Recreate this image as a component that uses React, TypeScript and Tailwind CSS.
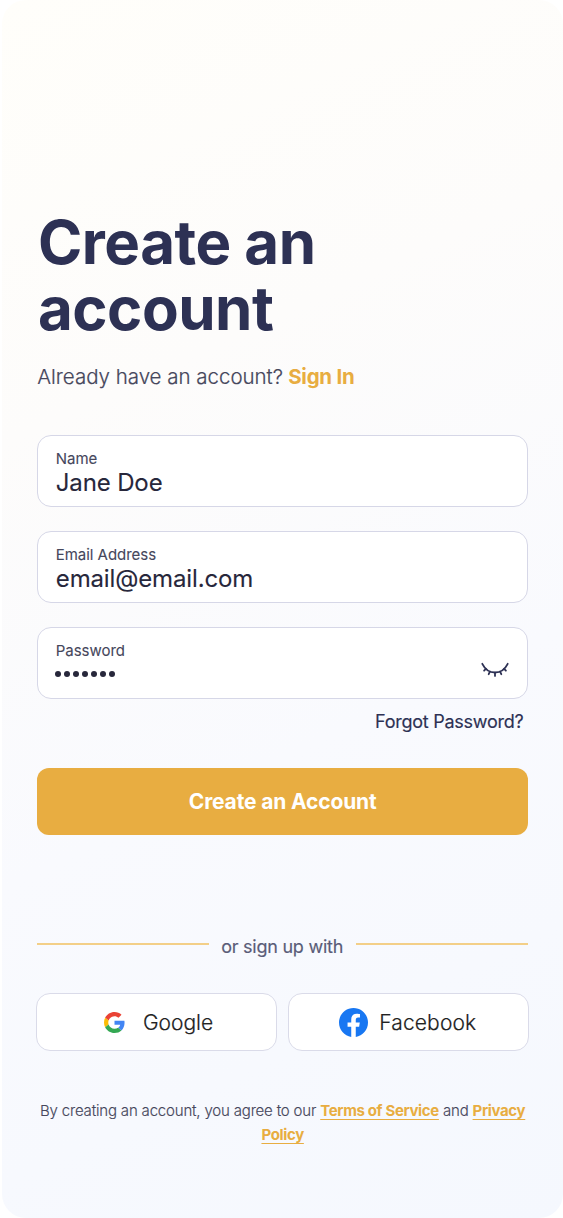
import React from "react";

function Field({ label, children, icon }: { label: string; children: React.ReactNode; icon?: React.ReactNode }) {
  return (
    <div className="flex h-[72px] w-full items-center justify-between rounded-[14px] border border-[#d6d7e7] bg-white pl-[17.5px] pr-[18.5px] pt-[3px]">
      <div className="flex flex-col">
        <span className="text-[15px] leading-[20px] tracking-[-0.04px] text-[#46475c] [-webkit-text-stroke:0.1px_#46475c]">{label}</span>
        <span className="h-[28px] text-[24px] leading-[28px] tracking-[-0.14px] text-[#27273b] [-webkit-text-stroke:0.1px_#27273b]">{children}</span>
      </div>
      {icon}
    </div>
  );
}

function ClosedEye() {
  return (
    <svg className="mt-[11px] h-[16px] w-[28px]" viewBox="0 0 28 16" fill="none" stroke="#2d3154" strokeWidth="1.8" strokeLinecap="round">
      <path d="M1.3 1.8C4 7.2 8.7 10.5 14 10.5S24 7.2 26.7 1.8" />
      <path d="M14 10.7v3.2M8.9 9.6l-1.2 2.6M19.1 9.6l1.2 2.6M4.9 6.8L3.1 8.7M23.1 6.8l1.8 1.9" />
    </svg>
  );
}

function GoogleLogo() {
  return (
    <svg className="h-[21px] w-[21px]" viewBox="0 0 48 48">
      <path fill="#EA4335" d="M24 9.5c3.54 0 6.71 1.22 9.21 3.6l6.85-6.85C35.9 2.38 30.47 0 24 0 14.62 0 6.51 5.38 2.56 13.22l7.98 6.19C12.43 13.72 17.74 9.5 24 9.5z" />
      <path fill="#4285F4" d="M46.98 24.55c0-1.57-.15-3.09-.38-4.55H24v9.02h12.94c-.58 2.96-2.26 5.48-4.78 7.18l7.73 6c4.51-4.18 7.09-10.36 7.09-17.65z" />
      <path fill="#FBBC05" d="M10.53 28.59c-.48-1.45-.76-2.99-.76-4.59s.27-3.14.76-4.59l-7.98-6.19C.92 16.46 0 20.12 0 24c0 3.88.92 7.54 2.56 10.78l7.97-6.19z" />
      <path fill="#34A853" d="M24 48c6.48 0 11.93-2.13 15.89-5.81l-7.73-6c-2.15 1.45-4.92 2.3-8.16 2.3-6.26 0-11.57-4.22-13.47-9.91l-7.98 6.19C6.51 42.62 14.62 48 24 48z" />
    </svg>
  );
}

function FacebookLogo() {
  return (
    <svg className="h-[29px] w-[29px]" viewBox="0 0 24 24">
      <path fill="#1877F2" d="M24 12.073c0-6.627-5.373-12-12-12s-12 5.373-12 12c0 5.99 4.388 10.954 10.125 11.854v-8.385H7.078v-3.47h3.047V9.43c0-3.007 1.792-4.669 4.533-4.669 1.312 0 2.686.235 2.686.235v2.953H15.83c-1.491 0-1.956.925-1.956 1.874v2.25h3.328l-.532 3.47h-2.796v8.385C19.612 23.027 24 18.062 24 12.073z" />
    </svg>
  );
}

const linkClass =
  "font-bold tracking-[-0.35px] text-[#e8ad41] underline decoration-[1px] underline-offset-[3px] [text-decoration-skip-ink:none] [-webkit-text-stroke:0]";

export default function App() {
  return (
    <main className="h-[1218px] w-[563px] bg-white pl-[2px] font-['Inter',sans-serif]">
      <div className="flex h-full w-full flex-col rounded-[24px] bg-[linear-gradient(155deg,#fffefa_0%,#fdfcfb_30%,#f9fafe_60%,#f5f8fe_100%)] pl-[35.3px] pr-[35px] pt-[209px]">
        <h1 className="pl-[0.7px] text-[60px] font-bold leading-[66px] tracking-[-0.5px] text-[#2d3154]">
          Create an
          <br />
          account
        </h1>
        <p className="mt-[22px] text-[20.5px] font-light leading-[28px] tracking-[-0.02px] text-[#46475c] [-webkit-text-stroke:0.2px_#46475c]">
          Already have an account?{" "}
          <a className="-ml-[0.5px] font-bold tracking-[-0.25px] text-[#e8ad41] [-webkit-text-stroke:0]">Sign In</a>
        </p>
        <form className="mt-[44px] flex flex-col">
          <div className="flex flex-col gap-[24px]">
            <Field label="Name">Jane Doe</Field>
            <Field label="Email Address">email@email.com</Field>
            <Field label="Password" icon={<ClosedEye />}>
              <span className="-ml-[0.5px] flex h-[26px] items-center gap-[3px]">
                {[0, 1, 2, 3, 4, 5, 6].map((i) => (
                  <i key={i} className="h-[6px] w-[6px] rounded-full bg-[#27273b]" />
                ))}
              </span>
            </Field>
          </div>
          <a className="mt-[10px] self-end pr-[4.5px] text-[18px] leading-[26px] tracking-[-0.25px] text-[#2d3154] [-webkit-text-stroke:0.15px_#2d3154]">
            Forgot Password?
          </a>
          <button type="button" className="mt-[33px] h-[67px] rounded-[12px] bg-[#e8ad41] text-[21px] font-bold tracking-[-0.15px] text-white">
            Create an Account
          </button>
        </form>
        <div className="mt-[95px] flex h-[28px] items-center justify-between">
          <span className="h-[2px] w-[172px] bg-[#f3cf88]" />
          <span className="pt-[5px] pr-[1px] text-[18px] leading-[24px] tracking-[-0.25px] text-[#5a5c78] [-webkit-text-stroke:0.15px_#5a5c78]">or sign up with</span>
          <span className="h-[2px] w-[172px] bg-[#f3cf88]" />
        </div>
        <div className="-mx-px mt-[35px] flex justify-between">
          <button type="button" className="flex h-[58px] w-[241px] items-center justify-center rounded-[14px] border border-[#dadbe9] bg-white pl-[4px]">
            <GoogleLogo />
            <span className="ml-[17.5px] pt-px text-[21px] font-light text-[#222] [-webkit-text-stroke:0.2px_#222]">Google</span>
          </button>
          <button type="button" className="flex h-[58px] w-[241px] items-center justify-center rounded-[14px] border border-[#dadbe9] bg-white pr-[2px]">
            <FacebookLogo />
            <span className="ml-[11.5px] pt-px text-[21px] font-light tracking-[0.15px] text-[#222] [-webkit-text-stroke:0.2px_#222]">Facebook</span>
          </button>
        </div>
        <p className="-mx-2 mt-[48px] text-center text-[15px] font-light leading-[24px] tracking-[-0.18px] text-[#46475c] [-webkit-text-stroke:0.15px_#46475c]">
          By creating an account, you agree to our{" "}
          <a className={linkClass}>Terms of Service</a> and{" "}
          <a className={linkClass}>Privacy</a>
          <br />
          <a className={linkClass}>Policy</a>
        </p>
      </div>
    </main>
  );
}
